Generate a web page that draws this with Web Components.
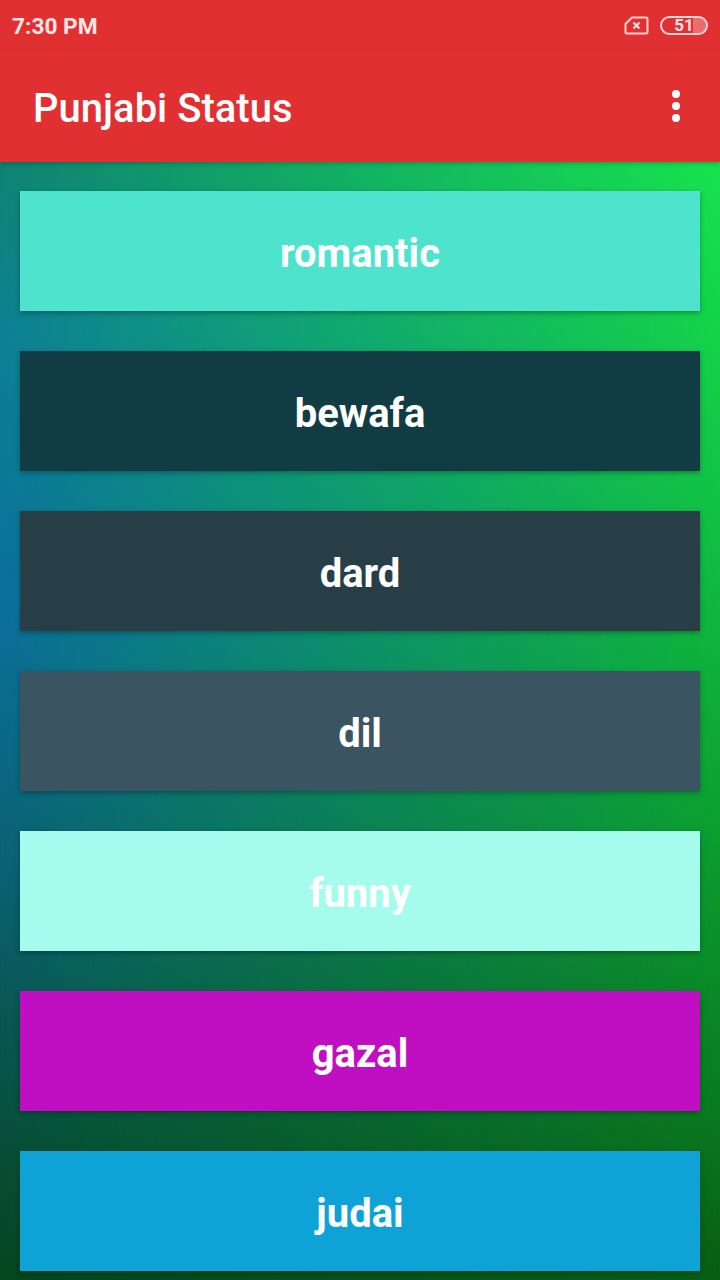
<!DOCTYPE html>
<html>
<head>
<meta charset="utf-8">
<style>
html, body { margin: 0; padding: 0; }
body { width: 720px; height: 1280px; overflow: hidden; font-family: Roboto, "Liberation Sans", sans-serif; }
</style>
</head>
<body>
<app-screen>
  <status-bar slot="top" time="7:30 PM" level="51"></status-bar>
  <app-toolbar slot="top" title="Punjabi Status"></app-toolbar>
  <category-button color="#4de3cd">romantic</category-button>
  <category-button color="#113c43">bewafa</category-button>
  <category-button color="#283e47">dard</category-button>
  <category-button color="#3a5561">dil</category-button>
  <category-button color="#a5fcec">funny</category-button>
  <category-button color="#c00fc3">gazal</category-button>
  <category-button color="#0fa2d6">judai</category-button>
</app-screen>

<script>
// ----------------------------
// Screen
// ----------------------------

class AppScreen extends HTMLElement {
  constructor() {
    super();
    const shadow = this.attachShadow({ mode: "open" });
    shadow.innerHTML = `
<style>
:host { display: flex; flex-direction: column; width: 720px; height: 1280px; overflow: hidden; }
.list {
  flex: 1;
  position: relative;
  display: flex;
  flex-direction: column;
  gap: 40px;
  padding: 29px 20px 0;
  overflow: hidden;
  background: linear-gradient(to bottom, #17e34f 0%, #12c443 30%, #0c9f30 60%, #0a7a20 85%, #095e14 100%);
}
.list::before {
  content: "";
  position: absolute;
  inset: 0;
  background: linear-gradient(to bottom, #0f8272 0%, #0d7f95 15%, #0a6f9c 40%, #0a5f70 65%, #07503f 85%, #05451f 100%);
  -webkit-mask-image: linear-gradient(to right, #000 0%, rgba(0,0,0,.6) 40%, transparent 100%);
  mask-image: linear-gradient(to right, #000 0%, rgba(0,0,0,.6) 40%, transparent 100%);
}
::slotted(category-button) { position: relative; }
</style>
<slot name="top"></slot>
<div class="list"><slot></slot></div>`;
  }
}
customElements.define("app-screen", AppScreen);

// ----------------------------
// Status bar
// ----------------------------

class StatusBar extends HTMLElement {
  constructor() {
    super();
    const shadow = this.attachShadow({ mode: "open" });
    shadow.innerHTML = `
<style>
:host { display: flex; align-items: center; height: 50px; padding: 0 12px; background: #e13032; color: #fde6e6; font: 700 22.700px Roboto, sans-serif; }
.time { flex: 1; margin-top: 3px; }
.icons { display: flex; align-items: center; gap: 11px; margin-top: 1px; }
.battery { position: relative; width: 48px; height: 19px; box-sizing: border-box; border: 2px solid #fbd5d5; border-radius: 10px; overflow: hidden; }
.empty { position: absolute; right: 0; top: 0; bottom: 0; width: 30%; background: rgba(255,255,255,.3); }
.level { position: relative; display: block; text-align: center; font: 700 17px/15px Roboto, sans-serif; color: #fde6e6; }
svg { display: block; }
</style>
<div class="time">${this.getAttribute("time")}</div>
<div class="icons">
  <svg width="25" height="19" viewBox="0 0 25 19" fill="none" stroke="#fbd5d5" stroke-width="2">
    <path d="M8 1.500H22a1.500 1.500 0 0 1 1.500 1.500V16a1.500 1.500 0 0 1-1.500 1.500H3A1.500 1.500 0 0 1 1.500 16V8z"/>
    <path d="M9.500 6.500 15.500 12.500M15.500 6.500 9.500 12.500" stroke-width="2.400"/>
  </svg>
  <div class="battery"><div class="empty"></div><span class="level">${this.getAttribute("level")}</span></div>
</div>`;
  }
}
customElements.define("status-bar", StatusBar);

// ----------------------------
// Toolbar
// ----------------------------

class AppToolbar extends HTMLElement {
  constructor() {
    super();
    const shadow = this.attachShadow({ mode: "open" });
    shadow.innerHTML = `
<style>
:host { display: flex; align-items: center; height: 112px; padding: 0 40px 0 33px; box-sizing: border-box; background: #e13032; color: #fff; font: 500 40px Roboto, sans-serif; position: relative; z-index: 1; box-shadow: 0 2px 4px rgba(0,0,0,.2); }
.title { flex: 1; margin-top: 4px; }
.more { display: flex; flex-direction: column; gap: 4px; }
.more i { display: block; width: 8px; height: 8px; border-radius: 50%; background: #fff; }
</style>
<div class="title">${this.getAttribute("title")}</div>
<div class="more"><i></i><i></i><i></i></div>`;
  }
}
customElements.define("app-toolbar", AppToolbar);

// ----------------------------
// Category button
// ----------------------------

class CategoryButton extends HTMLElement {
  constructor() {
    super();
    const shadow = this.attachShadow({ mode: "open" });
    shadow.innerHTML = `
<style>
:host { display: flex; flex: none; align-items: center; justify-content: center; height: 120px; color: #fff; font: 700 40px Roboto, sans-serif; box-shadow: 0 2px 5px rgba(0,0,0,.3); }
span { margin-top: 4px; }
</style>
<span><slot></slot></span>`;
    this.style.background = this.getAttribute("color");
  }
}
customElements.define("category-button", CategoryButton);
</script>
</body>
</html>
